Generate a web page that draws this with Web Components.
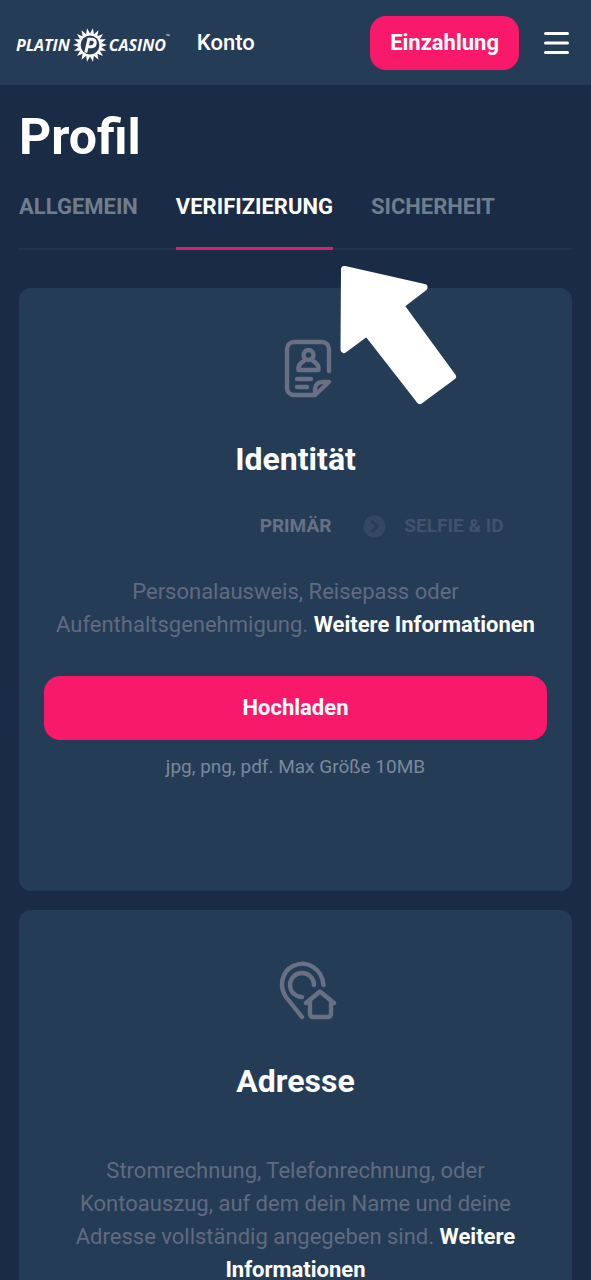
<!DOCTYPE html>
<html lang="de">
<head>
<meta charset="utf-8">
<meta name="viewport" content="width=device-width, initial-scale=1">
<title>Profil</title>
<style>
  html, body { margin: 0; height: 100%; }
  body {
    --page: #1a2c45;
    --surface: #253c57;
    --accent: #f8196a;
    --muted: #616a7f;
    background: var(--page);
    color: #fff;
    font: 22px/33px Roboto, "Liberation Sans", sans-serif;
  }
</style>
</head>
<body>
<profile-app></profile-app>

<template id="profile-app">
  <style>
    :host { display: flex; flex-direction: column; height: 100vh; }
    .scroll { position: relative; flex: 1; min-height: 0; overflow: auto; scrollbar-width: none; padding: 24px 19px; }
    h1 { margin: 0; font-size: 50px; line-height: 56px; font-weight: 700; }
    .cards { display: grid; gap: 19px; margin-top: 38px; }
    pointer-arrow { position: absolute; left: 338px; top: 177px; }
  </style>
  <site-header></site-header>
  <main class="scroll">
    <h1>Profil</h1>
    <tab-bar></tab-bar>
    <div class="cards">
      <verify-card heading="Identität">
        <id-icon slot="icon"></id-icon>
        <step-trail slot="steps"></step-trail>
        Personalausweis, Reisepass oder Aufenthaltsgenehmigung. <more-link></more-link>
        <upload-box slot="action"></upload-box>
      </verify-card>
      <verify-card heading="Adresse">
        <address-icon slot="icon"></address-icon>
        Stromrechnung, Telefonrechnung, oder Kontoauszug, auf dem dein Name und deine Adresse vollständig angegeben sind. <more-link></more-link>
        <upload-box slot="action"></upload-box>
      </verify-card>
    </div>
    <pointer-arrow></pointer-arrow>
  </main>
</template>

<template id="site-header">
  <style>
    :host { display: block; background: var(--surface); }
    header { display: flex; align-items: center; height: 85px; padding: 0 22px 0 16px; }
    .konto { margin-left: 27px; color: #fff; text-decoration: none; font-weight: 500; }
    .deposit { margin-left: auto; height: 54px; padding: 0 20px; border: 0; border-radius: 16px; background: var(--accent); color: #fff; font: inherit; font-weight: 700; }
    .menu { margin-left: 25px; padding: 0; border: 0; background: none; color: #fff; display: flex; }
  </style>
  <header>
    <brand-logo></brand-logo>
    <a class="konto" href="#konto">Konto</a>
    <button class="deposit" type="button">Einzahlung</button>
    <button class="menu" type="button" aria-label="Menü">
      <svg width="25" height="24" viewBox="0 0 25 24" fill="none" stroke="currentColor" stroke-width="3" stroke-linecap="round"><path d="M1.500 2.500h22M1.500 12h22M1.500 21.500h22"/></svg>
    </button>
  </header>
</template>

<template id="brand-logo">
  <style>
    :host { display: block; padding-top: 4px; }
    a { display: flex; align-items: center; color: #fff; text-decoration: none; font: italic 700 16px/20px "Open Sans", sans-serif; }
    svg { margin: 0 2px 0 3px; }
    .tm { align-self: flex-start; font: 5px/16px "Open Sans", sans-serif; }
  </style>
  <a href="#home">
    <span>PLATIN</span>
    <svg width="34" height="34" viewBox="-17 -17 34 34" aria-hidden="true">
      <polygon class="sun" fill="currentColor"/>
      <circle r="9.400" fill="#253c57"/>
      <path d="M-4.200 7.500L-1.200-5.800H2.200C6.600-5.800 6.200 1.800 1.200 1.800H-2.600" fill="none" stroke="currentColor" stroke-width="3"/>
    </svg>
    <span>CASINO</span><span class="tm">™</span>
  </a>
</template>

<template id="tab-bar">
  <style>
    :host { display: block; }
    nav { display: flex; gap: 38px; margin-top: 14px; border-bottom: 2px solid #22344c; }
    a { padding: 11px 0 24px; margin-bottom: -2px; border-bottom: 3px solid transparent; color: #707d8d; font-weight: 700; text-decoration: none; }
    a[aria-current] { color: #fff; border-color: #d9226b; }
  </style>
  <nav>
    <a href="#allgemein">ALLGEMEIN</a>
    <a href="#verifizierung" aria-current="page">VERIFIZIERUNG</a>
    <a href="#sicherheit">SICHERHEIT</a>
  </nav>
</template>

<template id="verify-card">
  <style>
    :host { display: block; background: var(--surface); border-radius: 12px; text-align: center; }
    section { display: flex; flex-direction: column; padding: 51px 25px 111px; }
    .icon { display: flex; justify-content: center; padding-left: 25px; color: #697084; }
    h2 { margin: 40px 0 0; font-size: 32px; line-height: 40px; font-weight: 700; }
    .steps { display: grid; min-height: 53px; }
    p { margin: 0; padding: 0 10px; color: var(--muted); }
  </style>
  <section>
    <div class="icon"><slot name="icon"></slot></div>
    <h2></h2>
    <div class="steps"><slot name="steps"></slot></div>
    <p><slot></slot></p>
    <slot name="action"></slot>
  </section>
</template>

<template id="more-link">
  <style>
    :host { display: inline; }
    a { color: #fff; font-weight: 700; text-decoration: none; }
  </style>
  <a href="#info">Weitere Informationen</a>
</template>

<template id="step-trail">
  <style>
    :host { display: block; padding: 34px 0 36px; }
    ol { display: grid; grid-template-columns: 1fr auto 1fr; margin: 0; padding: 0; list-style: none; font-size: 19px; line-height: 26px; font-weight: 700; color: #6a7083; }
    li:first-child { grid-column: 2; }
    .next { display: flex; align-items: center; gap: 18px; padding-left: 32px; color: #43516a; white-space: nowrap; }
  </style>
  <ol>
    <li>PRIMÄR</li>
    <li class="next">
      <svg width="23" height="23" viewBox="0 0 23 23" aria-hidden="true"><circle cx="11.500" cy="11.500" r="11" fill="#354762"/><path d="M9 6.500l5.500 5L9 16.500" fill="none" stroke="#263c57" stroke-width="2.500" stroke-linecap="round" stroke-linejoin="round"/></svg>
      SELFIE &amp; ID
    </li>
  </ol>
</template>

<template id="upload-box">
  <style>
    :host { display: block; margin-top: 35px; }
    button { display: block; width: 100%; height: 64px; padding: 0 0 2px; border: 0; border-radius: 16px; background: var(--accent); color: #fff; font: inherit; font-weight: 700; }
    small { display: block; margin-top: 14px; font-size: 19px; line-height: 26px; color: #7c889b; }
  </style>
  <button type="button">Hochladen</button>
  <small>jpg, png, pdf. Max Größe 10MB</small>
</template>

<template id="id-icon">
  <style>:host { display: block; height: 60px; }</style>
  <svg width="58" height="60" viewBox="0 0 58 60" fill="none" stroke="currentColor" stroke-width="4.400" stroke-linecap="round" stroke-linejoin="round" aria-hidden="true">
    <path d="M50 32V10a7 7 0 0 0-7-7H15a7 7 0 0 0-7 7v39a7 7 0 0 0 7 7h21l14-13h-7a7 7 0 0 0-7 7v6M18 40h14M18 48h10"/>
    <circle cx="29.500" cy="16" r="5"/>
    <path d="M25 22c-4 2-6 5-5.500 9h20c.5-4-1.500-7-5.500-9"/>
  </svg>
</template>

<template id="address-icon">
  <style>:host { display: block; height: 60px; }</style>
  <svg width="58" height="60" viewBox="0 0 58 60" fill="none" stroke="currentColor" stroke-width="4.400" stroke-linecap="round" stroke-linejoin="round" aria-hidden="true">
    <path d="M23 56L7 36C-1 24 4 10 14 5 28-2 43 8 44.500 24"/>
    <path d="M35 24A12 12 0 1 0 23 36"/>
    <path d="M27 42L41 30.500l14 11.500M31 40v13a3 3 0 0 0 3 3h15a3 3 0 0 0 3-3V40"/>
  </svg>
</template>

<template id="pointer-arrow">
  <style>:host { display: block; width: 120px; height: 145px; pointer-events: none; }</style>
  <svg width="120" height="145" viewBox="338 262 120 145" aria-hidden="true">
    <path d="M344.500 269.500L424 287.500 400.500 305.500 452.500 376.500 420 400.500 367 332.500 344 349.500Z" fill="#fff" stroke="#fff" stroke-width="7" stroke-linejoin="round"/>
  </svg>
</template>

<script>
  const define = (name, setup) => customElements.define(name, class extends HTMLElement {
    constructor() {
      super();
      this.attachShadow({ mode: 'open' }).append(document.getElementById(name).content.cloneNode(true));
    }
    connectedCallback() { if (setup) setup(this, this.shadowRoot); }
  });

  define('brand-logo', (host, root) => {
    const points = [];
    for (let i = 0; i < 36; i++) {
      const r = i % 2 ? 11.5 : 17;
      const a = Math.PI * (i + 1) / 18;
      points.push((r * Math.sin(a)).toFixed(2) + ',' + (-r * Math.cos(a)).toFixed(2));
    }
    root.querySelector('.sun').setAttribute('points', points.join(' '));
  });
  define('verify-card', (host, root) => {
    root.querySelector('h2').textContent = host.getAttribute('heading');
  });
  ['more-link', 'step-trail', 'upload-box', 'id-icon', 'address-icon', 'pointer-arrow', 'tab-bar', 'site-header', 'profile-app'].forEach(n => define(n));
</script>
</body>
</html>
